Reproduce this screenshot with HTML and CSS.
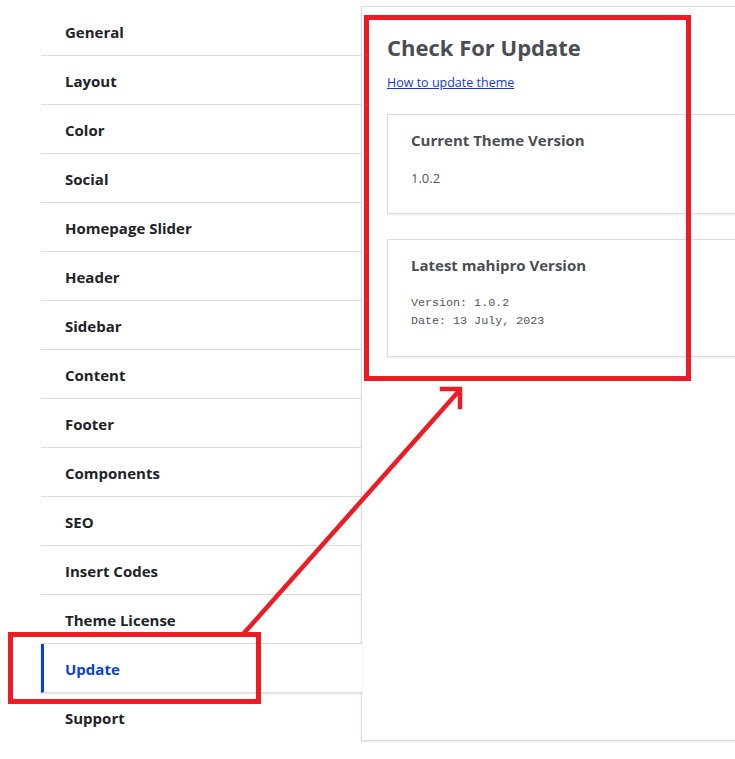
FILE: index.html
```html
<!DOCTYPE html>
<html lang="en">
<head>
<meta charset="utf-8">
<title>Theme Options - Update</title>
<link rel="stylesheet" href="styles.css">
</head>
<body>
<div class="wrap">
  <ul class="tabs">
    <li class="tab">General</li>
    <li class="tab">Layout</li>
    <li class="tab">Color</li>
    <li class="tab">Social</li>
    <li class="tab">Homepage Slider</li>
    <li class="tab">Header</li>
    <li class="tab">Sidebar</li>
    <li class="tab">Content</li>
    <li class="tab">Footer</li>
    <li class="tab">Components</li>
    <li class="tab">SEO</li>
    <li class="tab">Insert Codes</li>
    <li class="tab">Theme License</li>
    <li class="tab tab-active">Update</li>
    <li class="tab tab-last">Support</li>
  </ul>
  <section class="panel">
    <h1 class="panel-title">Check For Update</h1>
    <a class="panel-link" href="#">How to update theme</a>
    <div class="card card-first">
      <h2 class="card-title">Current Theme Version</h2>
      <p class="card-text">1.0.2</p>
    </div>
    <div class="card">
      <h2 class="card-title">Latest mahipro Version</h2>
      <pre class="card-code">Version: 1.0.2
Date: 13 July, 2023</pre>
    </div>
  </section>
</div>
<svg class="annot" width="735" height="759" viewBox="0 0 735 759" xmlns="http://www.w3.org/2000/svg">
  <g fill="none" stroke="#ed1c24" stroke-width="5">
    <rect x="366.5" y="17.5" width="322" height="361"/>
    <rect x="10.5" y="634.5" width="248" height="67"/>
  </g>
  <g fill="none" stroke="#ed1c24" stroke-width="4.5" stroke-linecap="square">
    <line x1="245" y1="632" x2="459" y2="391"/>
    <polyline points="442,389 460,389 460,407"/>
  </g>
</svg>
</body>
</html>
```

FILE: styles.css
```css
html, body {
  margin: 0;
  padding: 0;
  background: #ffffff;
  overflow: hidden;
}

body {
  width: 735px;
  height: 759px;
  position: relative;
  font-family: "Open Sans", "Noto Sans", sans-serif;
}

.wrap {
  display: flex;
  align-items: stretch;
  padding: 7px 0 0 41px;
}

.tabs {
  list-style: none;
  margin: 0;
  padding: 0;
  width: 320px;
  flex: none;
}

.tab {
  height: 46px;
  line-height: 46px;
  padding-top: 2px;
  padding-left: 24px;
  border-bottom: 1px solid #dcdcde;
  font-size: 15px;
  font-weight: 700;
  color: #1d2327;
  background: #ffffff;
}

.tab-active {
  position: relative;
  z-index: 2;
  margin-right: -1px;
  padding-left: 21px;
  border-left: 3px solid #0a3fd3;
  color: #0a3fd3;
  box-shadow: 0 1px 2px rgba(0, 0, 0, 0.12);
}

.tab-last {
  border-bottom: none;
}

.panel {
  position: relative;
  z-index: 1;
  width: 420px;
  flex: none;
  box-sizing: border-box;
  margin-top: -1px;
  border: 1px solid #dcdcde;
  box-shadow: 0 1px 2px rgba(0, 0, 0, 0.1);
  padding: 25px 0 0 25px;
  background: #ffffff;
}

.panel-title {
  margin: 0;
  font-size: 22px;
  line-height: 30px;
  font-weight: 700;
  color: #4a4e53;
}

.panel-link {
  display: inline-block;
  margin-top: 12px;
  font-size: 12.5px;
  line-height: 18px;
  color: #1336e0;
  text-decoration: underline;
}

.card {
  margin-top: 25px;
  border: 1px solid #dcdcde;
  box-shadow: 0 1px 2px rgba(0, 0, 0, 0.08);
  padding: 13px 23px 26px;
  background: #ffffff;
}

.card-first {
  margin-top: 22px;
}

.card-title {
  margin: 0;
  font-size: 15px;
  line-height: 24px;
  font-weight: 700;
  color: #4a4e53;
}

.card-text {
  margin: 17px 0 0;
  font-size: 13px;
  line-height: 18px;
  color: #50575e;
}

.card-code {
  margin: 17px 0 0;
  font-family: "Liberation Mono", "DejaVu Sans Mono", monospace;
  font-size: 11.7px;
  line-height: 18px;
  color: #50575e;
}

.annot {
  position: absolute;
  left: 0;
  top: 0;
  z-index: 5;
  pointer-events: none;
}
```
